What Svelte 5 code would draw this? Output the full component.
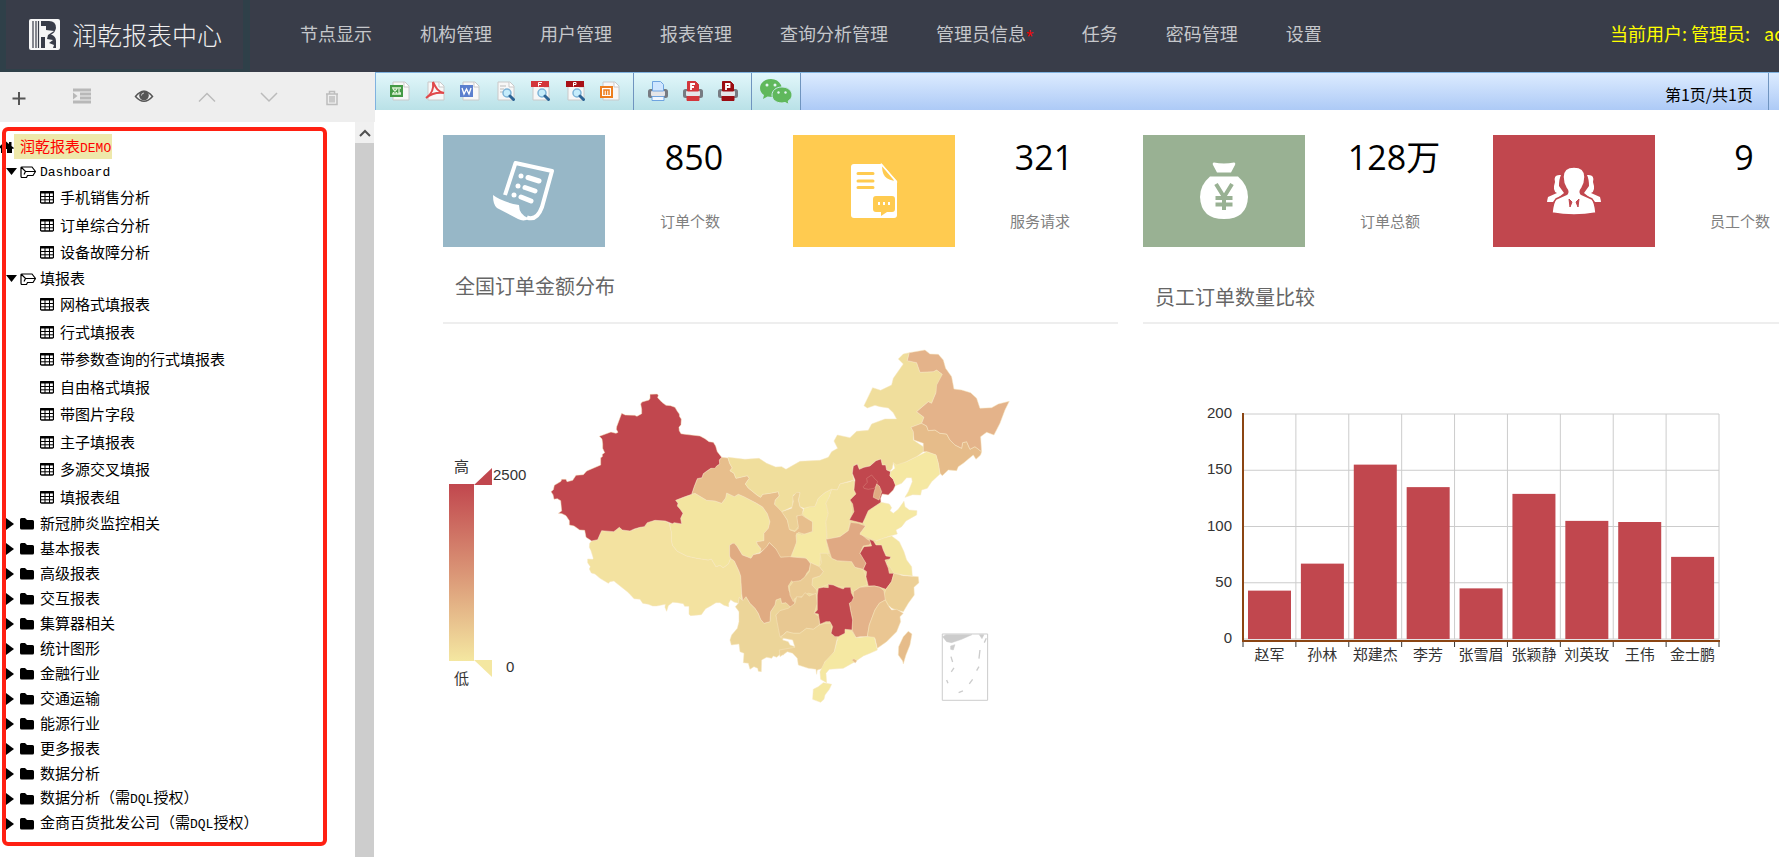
<script lang="ts">
	const navItems = ['节点显示', '机构管理', '用户管理', '报表管理', '查询分析管理', '管理员信息', '任务', '密码管理', '设置'];

	const treeTools = [
		{ id: 'add', label: '新增' },
		{ id: 'indent', label: '缩进' },
		{ id: 'view', label: '查看' },
		{ id: 'up', label: '上移' },
		{ id: 'down', label: '下移' },
		{ id: 'trash', label: '删除' }
	];

	let folders = $state([
		{ name: 'Dashboard', open: true, items: ['手机销售分析', '订单综合分析', '设备故障分析'] },
		{
			name: '填报表',
			open: true,
			items: ['网格式填报表', '行式填报表', '带参数查询的行式填报表', '自由格式填报', '带图片字段', '主子填报表', '多源交叉填报', '填报表组']
		},
		...[
			'新冠肺炎监控相关', '基本报表', '高级报表', '交互报表', '集算器相关', '统计图形', '金融行业',
			'交通运输', '能源行业', '更多报表', '数据分析', '数据分析（需DQL授权）', '金商百货批发公司（需DQL授权）'
		].map((name) => ({ name, open: false, items: [] as string[] }))
	]);

	// latin runs get their own narrower face
	const split = (text: string) => text.split(/([A-Za-z]+)/).filter(Boolean);

	const toolGroups = [
		[
			{ id: 'excel', label: '导出Excel' },
			{ id: 'pdf', label: '导出PDF' },
			{ id: 'word', label: '导出Word' },
			{ id: 'preview', label: '打印预览' },
			{ id: 'previewF', label: 'Flash打印预览' },
			{ id: 'previewP', label: 'PDF打印预览' },
			{ id: 'mht', label: '导出mht' }
		],
		[
			{ id: 'print', label: '打印' },
			{ id: 'printF', label: 'Flash打印' },
			{ id: 'printP', label: 'PDF打印' }
		],
		[{ id: 'wechat', label: '微信分享' }]
	];

	const stats = [
		{ id: 'orders', value: '850', label: '订单个数' },
		{ id: 'service', value: '321', label: '服务请求' },
		{ id: 'amount', value: '128万', label: '订单总额' },
		{ id: 'staff', value: '9', label: '员工个数' }
	];

	const bars = [
		{ name: '赵军', value: 43 },
		{ name: '孙林', value: 67 },
		{ name: '郑建杰', value: 155 },
		{ name: '李芳', value: 135 },
		{ name: '张雪眉', value: 45 },
		{ name: '张颖静', value: 129 },
		{ name: '刘英玫', value: 105 },
		{ name: '王伟', value: 104 },
		{ name: '金士鹏', value: 73 }
	];
	const plot = { x: 100, y: 90, w: 476, h: 225 };
	const step = plot.w / bars.length;
	const barX = (i: number) => plot.x + i * step;
	const barH = (v: number) => (v / 200) * plot.h;

	const west = [
		{ fill: '#eedb9b', d: 'M700 560 860 480 950 420 1020 480 1000 590 1080 700 1020 880 880 900 780 900 700 850Z' },
		{ fill: '#f3e2a0', d: 'M155 603 173 599 180 583 185 572 221 575 238 562 247 570 270 573 300 562 313 560 322 548 345 541 376 543 388 550 394 575 394 600 398 617 412 634 440 648 470 655 505 660 514 657 528 680 540 676 550 683 565 672 572 655 583 663 597 693 602 708 606 780 598 772 595 790 582 786 572 779 566 790 566 800 552 796 540 788 528 788 512 798 497 806 484 824 452 827 447 823 447 799 434 799 430 791 412 788 398 787 385 797 380 814 375 802 376 793 350 798 338 798 325 793 315 791 308 790 300 778 282 776 272 765 262 755 230 730 222 723 210 725 205 730 180 715 165 702 154 699 148 687 151 680 143 668 143 657 158 658 160 655 153 632 148 622 149 610Z' },
		{ fill: '#f3e5a0', d: 'M407 481 455 463 465 460 500 481 525 483 545 490 557 474 560 459 583 470 595 463 612 470 650 490 668 501 682 521 690 545 685 565 672 580 672 602 650 605 652 613 663 626 662 637 640 644 633 655 607 645 592 620 578 610 569 616 569 648 572 655 565 672 550 683 540 676 528 680 514 657 505 660 470 655 440 648 412 634 398 617 394 600 394 575 388 550 397 551 403 548 425 552 422 535 429 520 412 498 414 490Z' },
		{ fill: '#e7be8c', d: 'M545 352 564 354 569 370 577 384 570 392 582 400 588 415 622 407 628 415 616 432 625 444 652 466 662 472 668 463 690 460 715 455 718 468 706 480 704 493 724 510 742 540 750 570 765 575 775 565 770 535 772 525 785 525 800 535 818 545 817 575 795 583 775 577 768 585 770 610 757 640 752 652 722 652 710 640 708 627 688 608 678 625 660 637 663 626 652 613 650 605 672 602 672 580 685 565 690 545 682 521 668 501 650 490 612 470 595 463 583 470 560 459 557 474 545 490 525 483 500 481 465 460 455 463 463 439 472 416 486 413 490 401 513 385 530 378 539 372 538 360Z' },
		{ fill: '#ecd599', d: 'M598 772 606 780 618 770 630 790 645 805 655 820 662 838 672 850 690 845 692 815 705 795 708 780 722 775 725 790 738 788 752 802 740 812 720 815 708 825 712 838 725 845 723 862 733 885 728 900 745 905 750 915 765 920 760 930 742 933 730 945 722 942 710 952 700 948 695 955 680 952 665 960 664 995 655 994 653 985 642 980 630 988 625 970 610 968 612 940 600 935 597 912 574 915 570 900 575 885 592 865 597 845 597 815 586 800 595 790Z' },
		{ fill: '#e0ab82', d: 'M583 610 592 620 607 645 633 655 640 644 660 640 668 632 680 620 688 608 708 627 722 652 748 650 800 655 812 672 808 690 800 700 795 712 782 722 762 730 755 722 745 738 747 752 755 765 763 780 765 795 752 802 738 788 725 790 722 775 708 780 705 795 692 815 690 845 672 850 662 838 655 820 645 805 630 790 618 770 608 783 605 760 602 708 597 693 583 663 572 655 569 648 569 616 578 610Z' },
		{ fill: '#c1474e', d: 'M330 163 352 162 355 166 353 173 366 187 378 196 392 197 405 202 412 214 418 222 419 230 424 237 423 254 417 262 418 272 423 281 435 283 480 288 495 296 507 305 520 307 527 318 532 335 545 352 538 360 539 372 530 378 525 385 513 385 502 392 490 401 486 413 472 416 463 439 455 463 430 472 407 481 414 490 412 498 420 507 429 520 422 535 425 552 403 548 397 551 376 543 345 541 322 548 313 560 300 562 283 567 270 573 247 570 238 562 228 570 221 575 185 572 180 583 173 599 155 603 138 592 134 571 119 570 102 558 88 555 88 542 78 527 66 521 55 520 65 513 62 482 52 476 42 478 39 464 33 455 40 449 43 436 63 424 65 418 78 418 81 425 98 421 108 406 130 404 140 393 182 375 182 353 187 350 187 343 194 338 188 325 188 312 186 297 178 289 213 276 228 280 234 277 229 268 230 260 245 220 256 225 284 226 291 229 305 221 305 208 302 192 306 186 327 180 330 175Z' }
	];

	const east = [
		{ fill: '#f0de9c', d: 'M-156 352-105 358-63 355-40 370-13 381 5 380 18 388 60 364 120 361 145 352 155 335 173 325 162 303 172 285 210 293 230 274 265 271 275 252 315 237 350 237 340 218 325 204 300 200 285 196 262 204 252 197 278 143 302 151 335 135 340 115 370 72 355 57 370 42 388 38 382 62 410 68 420 97 460 95 470 90 487 103 468 158 455 190 445 185 410 215 432 232 425 250 393 262 400 275 400 300 430 320 430 335 410 350 380 365 350 380 340 368 337 385 330 393 320 390 317 375 307 375 303 357 288 362 270 378 252 382 238 388 232 372 220 378 217 400 222 420 180 432 172 450 155 448 135 458 115 475 105 500 72 505 60 500 55 480 60 458 40 465 38 500 5 515-16 493-14 480-2 468-5 455-30 460-52 463-58 472-68 466-95 444-104 432-92 415-98 407-132 415-138 400-150 392-143 384-151 370Z' },
		{ fill: '#ecd197', d: 'M50 457 60 458 55 480 60 500 70 508 66 525 50 528 55 560 45 573 28 568 22 540 5 515 20 510 35 505 40 485 38 470Z' },
		{ fill: '#f5e8a2', d: 'M155 448 148 470 138 490 145 520 138 545 140 598 142 620 148 640 122 642 120 665 118 680 92 668 75 652 35 650 50 605 50 580 65 585 98 575 98 545 75 530 68 522 72 505 90 500 105 500 115 475 135 458Z' },
		{ fill: '#f2e2a0', d: 'M155 448 172 450 180 432 210 425 222 420 222 450 228 462 210 480 215 510 210 547 205 572 180 590 142 598 138 545 145 520 138 490 148 470Z' },
		{ fill: '#eedb9b', d: 'M120 640 140 640 155 655 172 662 215 665 225 682 250 688 258 710 262 735 240 742 220 755 214 750 195 742 175 740 145 733 115 745 108 750 95 735 98 715 120 708 130 695 118 680 125 668Z' },
		{ fill: '#eacb94', d: 'M92 668 118 680 130 695 120 708 98 715 96 735 110 750 112 765 85 760 65 770 45 775 40 785 30 765 28 740 40 725 62 722 75 710 88 695Z' },
		{ fill: '#e8c892', d: 'M-12 825 0 812 25 805 45 790 50 770 65 772 75 758 88 768 108 760 112 790 103 820 118 830 118 855 100 868 80 865 60 880 40 880 20 875 10 885 0 890-5 865-10 840Z' },
		{ fill: '#ecd197', d: 'M2 893 20 875 40 880 60 880 80 865 100 868 118 855 135 850 155 850 155 880 165 890 173 890 163 935 150 955 135 965 130 985 112 990 110 1003 108 988 85 985 55 975 52 955 38 940 22 935 0 950-2 930 45 922 38 900Z' },
		{ fill: '#e0a983', d: 'M212 547 235 550 257 558 240 580 262 598 275 605 268 615 250 618 240 640 255 655 258 670 250 688 225 682 215 665 172 662 155 655 150 640 138 598 180 590 205 572Z' },
		{ fill: '#f5e8a2', d: 'M303 487 328 492 335 503 330 512 340 520 355 508 372 484 375 500 388 510 411 512 410 525 395 533 378 543 365 560 348 570 352 582 330 588 310 595 290 602 270 595 240 583 257 558 250 548 258 525 265 512Z' },
		{ fill: '#f3e5a0', d: 'M290 602 310 595 335 588 358 605 372 635 380 660 395 680 397 708 370 705 342 700 330 680 318 670 332 655 318 648 310 630 295 625 285 610Z' },
		{ fill: '#c1474e', d: 'M232 372 238 388 252 382 270 378 288 362 303 357 307 375 317 375 320 390 332 395 330 408 340 418 347 435 340 450 325 465 307 462 302 475 303 487 265 512 255 535 248 550 208 540 222 515 218 492 210 480 228 462 222 450 225 420 217 400 220 378Z' },
		{ fill: '#c1474e', line: '#da8a80', d: 'M250 440 262 427 260 415 275 405 285 417 293 424 290 436 282 445 265 448 252 445Z' },
		{ fill: '#e0ab82', d: 'M290 432 298 438 305 455 297 480 280 472 282 458Z' },
		{ fill: '#c1474e', d: 'M268 598 280 602 288 615 305 615 310 630 318 648 332 650 330 657 315 660 325 685 328 700 342 700 335 725 318 748 300 742 283 738 265 738 258 710 260 695 250 688 258 670 240 640 252 620 275 618Z' },
		{ fill: '#eccf95', d: 'M342 700 370 707 415 710 417 728 402 742 403 765 385 790 370 815 350 810 335 805 325 795 310 770 318 748 335 725Z' },
		{ fill: '#e4b38a', d: 'M220 755 240 742 283 738 300 742 312 752 316 780 298 790 285 810 268 855 262 890 240 890 228 893 216 870 218 840 212 812 208 790 220 775Z' },
		{ fill: '#eac692', d: 'M316 780 325 797 335 810 350 808 370 820 360 830 362 845 350 875 320 905 292 925 285 895 262 890 268 855 285 810 298 790Z' },
		{ fill: '#f5e8a2', d: 'M195 868 216 875 228 893 262 890 283 892 292 930 270 940 250 948 225 965 190 985 148 988 138 1000 140 1028 122 1018 120 995 135 965 163 935 175 890Z' },
		{ fill: '#e6bc8a', d: 'M215 960 222 956 231 962 226 969Z' },
		{ fill: '#f5e8a2', d: 'M100 1048 115 1040 130 1028 155 1033 148 1048 135 1065 132 1078 122 1087 98 1078Z' },
		{ fill: '#c1474e', d: 'M145 733 160 735 175 742 190 747 195 742 212 742 214 758 221 773 215 785 208 790 212 812 218 840 216 870 195 868 195 880 175 890 165 890 153 880 158 860 150 845 138 845 120 853 115 822 103 820 112 810 112 765 115 745 130 742 145 743Z' },
		{ fill: '#e6bc8a', d: 'M385 874 396 882 390 915 378 945 370 972 368 963 355 945 356 920 370 890Z' },
		{ fill: '#e6bc8a', d: 'M393 262 425 250 440 258 445 272 465 270 480 280 500 282 510 300 525 315 545 325 548 308 560 305 570 328 585 320 605 335 602 345 588 358 580 345 568 355 550 370 535 380 530 392 505 390 487 407 480 400 475 370 468 345 440 335 430 335 430 310 402 300 400 275Z' },
		{ fill: '#e4b38a', d: 'M388 38 435 30 450 42 475 43 490 60 497 85 515 110 522 147 545 150 572 158 590 175 600 205 635 203 655 192 688 184 675 210 660 250 642 285 620 277 602 290 605 335 585 320 570 328 560 305 548 308 545 325 525 315 510 300 500 282 480 280 465 270 445 272 440 258 425 250 432 232 410 215 445 185 455 190 468 158 470 135 487 103 470 90 460 95 420 97 410 68 382 62Z' },
		{ fill: '#f5e8a2', d: 'M440 335 468 345 475 370 480 402 455 425 442 445 425 450 422 465 398 464 375 472 385 455 397 425 395 413 380 413 365 430 347 437 340 418 330 408 332 395 345 385 340 368 350 375 380 365 410 350Z' }
	];
</script>

{#snippet treeIcon(id: string)}
	<svg width="20" height="20" viewBox="0 0 20 20" fill="none" aria-hidden="true">
		{#if id === 'add'}
			<path d="M10 5v13M3.500 11.500h13" stroke="#555" stroke-width="2" />
		{:else if id === 'indent'}
			<path d="M1 3h18M8 7h11M8 11h11M1 15h18" stroke="#b8b8b8" stroke-width="3" />
			<path d="M1 5.500 5.500 9 1 12.500z" fill="#b8b8b8" />
		{:else if id === 'view'}
			<path d="M1.500 9.500Q10-1 18.500 9.500Q10 19 1.500 9.500Z" stroke="#555" stroke-width="1.500" />
			<circle cx="10" cy="8.500" r="4.800" fill="#555" />
			<path d="M7.500 8.500Q7.500 6 10 6" stroke="#ccc" />
		{:else if id === 'up'}
			<path d="M2 14.500 10 6.500 18 14.500" stroke="#bbb" stroke-width="1.500" />
		{:else if id === 'down'}
			<path d="M2 6 10 14 18 6" stroke="#bbb" stroke-width="1.500" />
		{:else}
			<path d="M4 7h12M5 7v10.500h10V7M7.500 6.500V4.500h5v2M8 9v6.500M10 9v6.500M12 9v6.500" stroke="#bdbdbd" stroke-width="1.500" />
		{/if}
	</svg>
{/snippet}

{#snippet magnifier()}
	<circle cx="12" cy="12" r="4" fill="#c5ecfb" stroke="#7db4d8" stroke-width="1.500" />
	<path d="M15 15 18.500 18.500" stroke="#2d6495" stroke-width="3" stroke-linecap="round" />
{/snippet}

{#snippet toolIcon(id: string)}
	<svg width={id === 'wechat' ? 32 : 20} height={id === 'wechat' ? 26 : 20} viewBox={id === 'wechat' ? '0 0 32 26' : '0 0 20 20'} aria-hidden="true">
		{#if id === 'wechat'}
			<path d="M11 1C4.500 1 0 5 0 10c0 3 1.500 5.500 4 7l-1 4 4.500-2.500 4.500.5C22 19 22 9 21 7 19 3 15.500 1 11 1Z" fill="#60b85c" />
			<path d="M22 9c-6 0-10 3.500-10 8s4 8 10 8l3-.5 4 2-.8-3.500C30.500 21.500 32 19.500 32 17c0-4.500-4.500-8-10-8Z" fill="#60b85c" stroke="#c9e9ed" />
			<g fill="#e5f6f3"><circle cx="7" cy="7" r="1.500" /><circle cx="15" cy="7" r="1.500" /><circle cx="18.500" cy="14.500" r="1.200" /><circle cx="25.500" cy="14.500" r="1.200" /></g>
		{:else if id.startsWith('print')}
			{@const tint = id === 'printF' ? '#d3363b' : id === 'printP' ? '#9b0c12' : '#cfe6ff'}
			<rect x="0" y="8" width="20" height="9" rx="2.500" fill="#777b82" />
			<rect x="3" y="10" width="14" height="5" rx="1" fill="#e4e5e8" />
			<path d="M4.500 10V.5h8l3 3V10z" fill={tint} stroke={id === 'print' ? '#6fa4e0' : tint} />
			<path d="M4 15.500h12v4H4z" fill={id === 'print' ? '#eef6ff' : tint} stroke={id === 'print' ? '#6fa4e0' : tint} />
			{#if id !== 'print'}
				<path d={id === 'printF' ? 'M8 9V3h4M8 6h3' : 'M8 9V3h3.500v3H8'} fill="none" stroke="#fff" stroke-width="1.800" />
			{/if}
		{:else}
			<path d="M3 1h12l4 4v14H3z" fill="#f7f7f7" stroke="#c9c9c9" />
			<path d="M14 1v5h5" fill="#fff" stroke="#c9c9c9" />
			{#if id === 'excel'}
				<rect x="0" y="4" width="13" height="12" fill="#459a45" />
				<path d="M2 7h9M2 13h9M3 8l4 4M7 8l-4 4M9 8v4h2" fill="none" stroke="#dff2d8" stroke-width="1.300" />
			{:else if id === 'pdf'}
				<path d="M8 1C11 7 13 11 19 12 12 11 6 13 1 17 7 13 9 8 8 1Z" fill="none" stroke="#e0484a" stroke-width="2" />
			{:else if id === 'word'}
				<rect x="0" y="4" width="13" height="12" fill="#5b7fce" />
				<path d="M2 7l2 6 2.500-5L9 13l2-6" fill="none" stroke="#fff" stroke-width="1.300" />
			{:else if id === 'mht'}
				<rect x="1" y="6" width="11" height="10" fill="#fff" stroke="#ed7d1d" stroke-width="2" />
				<path d="M4 14V9h5v5M6.500 9v5" fill="none" stroke="#ed7d1d" stroke-width="1.500" />
			{:else}
				{#if id === 'preview'}
					<path d="M5 5h6M5 8h4M5 11h3" stroke="#bbb" />
				{:else}
					<rect x="1" y="0" width="18" height="6" fill={id === 'previewF' ? '#d3363b' : '#a81016'} />
					<path d={id === 'previewF' ? 'M8.500 5.500V1.500H12M8.500 3.500H11' : 'M8.500 5.500V1.500H11V3.500H8.500'} fill="none" stroke="#fff" />
				{/if}
				{@render magnifier()}
			{/if}
		{/if}
	</svg>
{/snippet}

{#snippet statIcon(id: string)}
	<svg width="64" height="64" viewBox="0 0 64 64" fill="#fff" aria-hidden="true">
		{#if id === 'orders'}
			<path d="M13 36 23.500 4 60 12 50 48Q45 62 35 58.500" fill="none" stroke="#fff" stroke-width="4" stroke-linejoin="round" />
			<path d="M1 36Q10 43 27 46Q27 56 37 59.500Q32 63 26 60L5 49Q1 46 1 36Z" />
			<circle cx="29" cy="17" r="2.500" /><circle cx="26" cy="27" r="2.500" /><circle cx="22" cy="36" r="2.500" />
			<path d="M36 18.500 47 22M33 28.500 43 32M29 38 39 42" stroke="#fff" stroke-width="5" stroke-linecap="round" />
		{:else if id === 'service'}
			<path d="M12 5H40L55 22V56Q55 59 52 59H12Q9 59 9 56V8Q9 5 12 5Z" />
			<path d="M39.500 5.500Q38 22 54 22.500Z" fill="#ffcb50" stroke="#fff" stroke-width="1.500" />
			<path d="M16 14.500H31M16 22H31M16 28.500H31" stroke="#ffcb50" stroke-width="3" stroke-linecap="round" />
			<path d="M34 37H50Q53 37 53 40V50Q53 53 50 53H45L39 57V53H34Q31 53 31 50V40Q31 37 34 37Z" fill="#ffcb50" />
			<path d="M36 44.500h2M41 44.500h2M46 44.500h2" stroke="#fff" stroke-width="3" />
		{:else if id === 'amount'}
			<path d="M22 3.500Q32 5.500 42 3.500Q44 4 43 6L39 13.500H25L21 6Q20 4 22 3.500Z" />
			<path d="M18 17.500H46Q56 26 56 38Q55 60 32 60Q9 60 8 38Q8 26 18 17.500Z" />
			<path d="M24 25 32 38 40 25M32 37V51M23.500 39H40.500M23.500 45.500H40.500" fill="none" stroke="#99b193" stroke-width="4" />
		{:else}
			<path d="M19 16Q11 15 13 23Q10 32 15 34L6 38Q5 42 5 43H11L22 34 17 27Q17 20 19 16Z" />
			<path d="M45 16Q53 15 51 23Q54 32 49 34L58 38Q59 42 59 43H53L42 34 47 27Q47 20 45 16Z" />
			<path d="M32 8Q43 8 43 18Q43 24 40 29Q37 33 39 35L50 40Q53 43 54 54Q32 58 10 54Q11 43 14 40L25 35Q27 33 24 29Q21 24 21 18Q21 8 32 8Z" stroke="#c1474e" stroke-width="1.500" />
			<path d="M27 40 30 43 28 48ZM37 40 34 43 36 48Z" fill="#c1474e" stroke="#c1474e" />
		{/if}
	</svg>
{/snippet}

<div class="app">
	<header>
		<a class="logo" href="#home">
			<svg width="31" height="31" viewBox="0 0 31 31" aria-hidden="true">
				<rect width="31" height="31" rx="2" fill="#f7f7f7" />
				<path d="M4 2V29M7 2V29M9.500 2V29" stroke="#393d49" stroke-width="1.200" />
				<path d="M12 2H20Q27 2 27 9Q26 14 22 15.500Q27 17 27 22V29H24L25 26 20 24 24 21 18 20 19 16 25 12 17 11V7H12ZM12 18H16V29H12Z" fill="#393d49" />
			</svg>
			<span>润乾报表中心</span>
		</a>
		<nav>
			{#each navItems as item}
				<a href="#nav">{item}{#if item === '管理员信息'}<b>*</b>{/if}</a>
			{/each}
		</nav>
		<div class="user"><span>当前用户: 管理员:</span><span>admin</span></div>
	</header>

	<div class="body">
		<aside>
			<div class="tree-tools">
				{#each treeTools as tool}
					<button aria-label={tool.label}>{@render treeIcon(tool.id)}</button>
				{/each}
			</div>
			<div class="tree-area">
				<div class="tree">
					<div class="root">
						<svg width="14" height="14" viewBox="0 0 14 14" aria-hidden="true">
							<path d="M-1 7 5.500 1 9 4V2h2.500v4L14 8l-1 1-1-.500V13H7V9H5v4H1V8L-1 9Z" />
						</svg>
						<a href="#root">{#each split('润乾报表DEMO') as part}<span class:latin={/[A-Za-z]/.test(part)}>{part}</span>{/each}</a>
					</div>
					{#each folders as folder}
						<div class="folder">
							<button aria-label="展开或收起 {folder.name}" aria-expanded={folder.open} onclick={() => (folder.open = !folder.open)}>
								<svg width="12" height="14" viewBox="0 0 12 14" aria-hidden="true">
									<path d={folder.open ? 'M0 3h11L5.500 10z' : 'M0 1v12l8-6z'} />
								</svg>
							</button>
							<svg width="16" height="14" viewBox="0 0 16 14" aria-hidden="true">
								{#if folder.open}
									<path d="M1 11V3Q1 2 2 2H12L15.500 6.500 13 10.500H7.500L6.500 12.500H2Q1 12.500 1 11M1.500 2.500 5.500 6.500H15.500M5.500 6.500 4 9.500" fill="none" stroke="#000" stroke-width="1.200" />
								{:else}
									<path d="M0 2.500Q0 1 1.500 1H5L7 3H12.500Q14 3 14 4.500V11Q14 12.500 12.500 12.500H1.500Q0 12.500 0 11Z" />
								{/if}
							</svg>
							<a href="#folder">{#each split(folder.name) as part}<span class:latin={/[A-Za-z]/.test(part)}>{part}</span>{/each}</a>
						</div>
						{#if folder.open && folder.items.length}
							<ul>
								{#each folder.items as item}
									<li>
										<svg width="14" height="13" viewBox="0 0 14 13" fill="none" stroke="#000" aria-hidden="true">
											<rect x=".500" y=".500" width="13" height="11.500" rx="1" stroke-width="1.300" />
											<path d="M0 1.500H14" stroke-width="2" />
											<path d="M0 5.500H14M0 8.800H14M5 2V12M9.500 2V12" />
										</svg>
										<a href="#report">{item}</a>
									</li>
								{/each}
							</ul>
						{/if}
					{/each}
				</div>
				<div class="outline"></div>
				<div class="scrollbar">
					<button aria-label="向上滚动">
						<svg width="12" height="8" viewBox="0 0 12 8" fill="none" aria-hidden="true"><path d="M1 7 6 2 11 7" stroke="#505050" stroke-width="2" /></svg>
					</button>
					<div class="thumb"></div>
				</div>
			</div>
		</aside>

		<main>
			<div class="toolbar">
				{#each toolGroups as group}
					<div class="group">
						{#each group as tool}
							<button aria-label={tool.label}>{@render toolIcon(tool.id)}</button>
						{/each}
					</div>
				{/each}
				<div class="pages">第1页/共1页</div>
			</div>

			<div class="report">
				<div class="stats">
					{#each stats as stat}
						<div class="stat">
							<div class="tile {stat.id}">{@render statIcon(stat.id)}</div>
							<div class="figures">
								<div class="value">{stat.value}</div>
								<div class="label">{stat.label}</div>
							</div>
						</div>
					{/each}
				</div>

				<div class="panels">
					<section class="map">
						<h2>全国订单金额分布</h2>
						<svg viewBox="0 0 675 400" role="img" aria-label="全国订单金额分布">
							<defs>
								<linearGradient id="heat" x1="0" y1="0" x2="0" y2="1">
									<stop offset="0" stop-color="#c1474e" />
									<stop offset=".5" stop-color="#da9576" />
									<stop offset="1" stop-color="#f4e7a1" />
								</linearGradient>
							</defs>
							<rect x="6" y="160" width="25" height="177" fill="url(#heat)" />
							<path d="M31 161 49 144V161Z" fill="#c1474e" />
							<path d="M31 336H49V353Z" fill="#f4e7a1" />
							<text x="11" y="148">高</text>
							<text x="11" y="360">低</text>
							<text x="50" y="156">2500</text>
							<text x="63" y="348">0</text>
							<g transform="translate(97 16) scale(.3333)" stroke="#f6e6c0" stroke-width="1.500" stroke-linejoin="round">
								{#each west as province}
									<path d={province.d} fill={province.fill} />
								{/each}
								<g transform="translate(720 0)">
									{#each east as province}
										<path d={province.d} fill={province.fill} stroke={province.line} />
									{/each}
									<g stroke="#ccc" fill="none">
										<rect x="487" y="882" width="136" height="199" stroke-width="3" />
										<path d="M488 890 498 884H576L545 898 515 908 500 905Z M598 884H612L606 896Z M512 918 525 914 520 930 512 928Z" fill="#ccc" />
										<path d="M619 895 613 908M600 930 597 956M597 980 590 992M578 1018 568 1032M549 1053 536 1058M500 1020 504 1030M522 984 514 996M513 950 518 966" stroke-width="4" />
									</g>
								</g>
							</g>
						</svg>
					</section>

					<section class="chart">
						<h2>员工订单数量比较</h2>
						<svg viewBox="0 0 700 400" role="img" aria-label="员工订单数量比较">
							{#each [0, 50, 100, 150, 200] as tick}
								<path d="M{plot.x} {plot.y + plot.h - barH(tick)}h{plot.w}" stroke="#ccc" />
								<text x="89" y={plot.y + plot.h - barH(tick) + 4} text-anchor="end">{tick}</text>
							{/each}
							{#each bars as bar, i}
								<path d="M{barX(i + 1)} {plot.y}v{plot.h}" stroke="#ccc" />
								<rect x={barX(i) + 5} y={plot.y + plot.h - barH(bar.value)} width="43" height={barH(bar.value)} fill="#c1474e" />
								<text x={barX(i) + step / 2} y="336" text-anchor="middle">{bar.name}</text>
							{/each}
							<path d="M100 89V318M99 317H577" stroke="#8b4513" stroke-width="2" fill="none" />
							{#each { length: bars.length + 1 } as _, i}
								<path d="M{barX(i)} 318v5" stroke="#333" />
							{/each}
						</svg>
					</section>
				</div>
			</div>
		</main>
	</div>
</div>

<style>
	:global(body) {
		overflow: hidden;
	}
	.app {
		display: flex;
		flex-direction: column;
		height: 100vh;
		font-family: "Open Sans", "Noto Sans CJK SC", sans-serif;
		background: #fff;
		color: #000;
	}
	a {
		color: inherit;
		text-decoration: none;
	}
	button {
		display: flex;
		align-items: center;
		justify-content: center;
		padding: 0;
		border: 0;
		background: none;
		cursor: pointer;
	}
	svg {
		display: block;
		flex: none;
	}

	header {
		display: flex;
		align-items: flex-start;
		flex: none;
		height: 72px;
		background: #393d49;
		color: #c5c7cb;
		font-family: "Noto Sans CJK SC", sans-serif;
		font-size: 18px;
		line-height: 67px;
		white-space: nowrap;
		overflow: hidden;
	}
	.logo {
		box-sizing: border-box;
		display: flex;
		align-items: center;
		gap: 12px;
		flex: none;
		width: 250px;
		height: 72px;
		padding-left: 23px;
		border: solid #2f4049;
		border-width: 0 7px 3px 6px;
		color: #f0f0f0;
		font-size: 25px;
		font-weight: 300;
	}
	nav {
		display: flex;
		padding-left: 26px;
	}
	nav a {
		padding: 0 24px;
	}
	nav b {
		color: #f00;
		font-family: "Open Sans", sans-serif;
		font-size: 14px;
		font-weight: 400;
	}
	.user {
		display: flex;
		gap: 14px;
		flex: none;
		width: 169px;
		margin-left: auto;
		color: #ff0;
	}

	.body {
		display: flex;
		flex: 1;
		min-height: 0;
	}
	aside {
		display: flex;
		flex-direction: column;
		flex: none;
		width: 375px;
	}
	.tree-tools {
		display: grid;
		grid-template-columns: repeat(6, 1fr);
		align-items: center;
		flex: none;
		height: 50px;
		background: #eee;
	}
	.tree-tools button {
		justify-content: flex-start;
		padding-left: 9px;
	}
	.tree-area {
		position: relative;
		display: flex;
		flex: 1;
		min-height: 0;
	}
	.tree {
		flex: 1;
		padding-top: 12px;
		overflow: hidden;
		font-family: "Noto Sans CJK SC", sans-serif;
		font-size: 15px;
		line-height: 23px;
		white-space: nowrap;
	}
	.latin {
		font-family: "Liberation Mono", monospace;
		font-size: 13px;
	}
	.root,
	.folder {
		display: flex;
		align-items: center;
		height: 25px;
	}
	.root a {
		height: 25px;
		padding: 0 1px 0 6px;
		background: #eee8aa;
		color: #f00;
	}
	.folder {
		padding-left: 6px;
	}
	.folder button {
		width: 14px;
		justify-content: flex-start;
	}
	.folder a {
		padding: 0 0 2px 4px;
	}
	ul {
		margin: 0;
		padding: 0;
		list-style: none;
	}
	li {
		display: flex;
		align-items: center;
		gap: 6px;
		height: 27px;
		padding-left: 40px;
	}
	li:nth-child(even) {
		height: 28px;
	}
	li a {
		padding-bottom: 2px;
	}
	.outline {
		position: absolute;
		inset: 5px 48px 11px 2px;
		border: 4px solid #ff2012;
		border-radius: 6px;
		pointer-events: none;
	}
	.scrollbar {
		display: flex;
		flex-direction: column;
		width: 19px;
		margin-right: 1px;
		background: #f0f0f0;
	}
	.scrollbar button {
		height: 21px;
	}
	.thumb {
		flex: 1;
		background: #cdcdcd;
	}

	main {
		flex: 1;
		min-width: 0;
		overflow: hidden;
	}
	.toolbar {
		box-sizing: border-box;
		display: flex;
		height: 38px;
		border-top: 1px solid #7fb2df;
		border-left: 1px solid #7fb2df;
		background: linear-gradient(#dcebff, #adcaf6);
	}
	.group {
		display: flex;
		align-items: center;
		gap: 15px;
		padding: 0 13px 1px 14px;
		border-right: 1px solid #6f94bf;
		background: linear-gradient(#e2f7fb, #b9e1e7);
	}
	.group:nth-child(3) {
		padding: 0 8px 1px;
	}
	.pages {
		margin-left: auto;
		margin-right: 10px;
		padding: 9px 15px 0 0;
		border-right: 1px solid #6f94bf;
		font-family: "Noto Sans CJK SC", sans-serif;
		font-size: 16px;
		line-height: 24px;
	}

	.report {
		min-width: 1400px;
		margin: 25px 0 0 68px;
	}
	.stats {
		display: grid;
		grid-template-columns: repeat(4, 1fr);
	}
	.stat {
		display: flex;
		height: 112px;
	}
	.tile {
		display: flex;
		align-items: center;
		justify-content: center;
		width: 162px;
	}
	.orders {
		background: #97b7c7;
	}
	.service {
		background: #ffcb50;
	}
	.amount {
		background: #99b193;
	}
	.staff {
		background: #c1474e;
	}
	.figures {
		flex: 1;
		padding-right: 18px;
		text-align: center;
	}
	.value {
		padding-left: 8px;
		font-size: 34px;
		line-height: 44px;
	}
	.label {
		margin-top: 30px;
		color: #808080;
		font-size: 15px;
		line-height: 24px;
	}
	.panels {
		display: grid;
		grid-template-columns: repeat(2, 1fr);
	}
	.map {
		margin-right: 25px;
	}
	h2 {
		box-sizing: border-box;
		height: 77px;
		margin: 0;
		padding: 5px 12px 0;
		border-bottom: 2px solid #eee;
		color: #666;
		font-size: 20px;
		font-weight: 400;
		line-height: 70px;
	}
	.chart h2 {
		padding-top: 16px;
	}
	.panels svg {
		width: 100%;
	}
	text {
		fill: #333;
		font-family: "Liberation Sans", "Noto Sans CJK SC", sans-serif;
		font-size: 15px;
	}
</style>
